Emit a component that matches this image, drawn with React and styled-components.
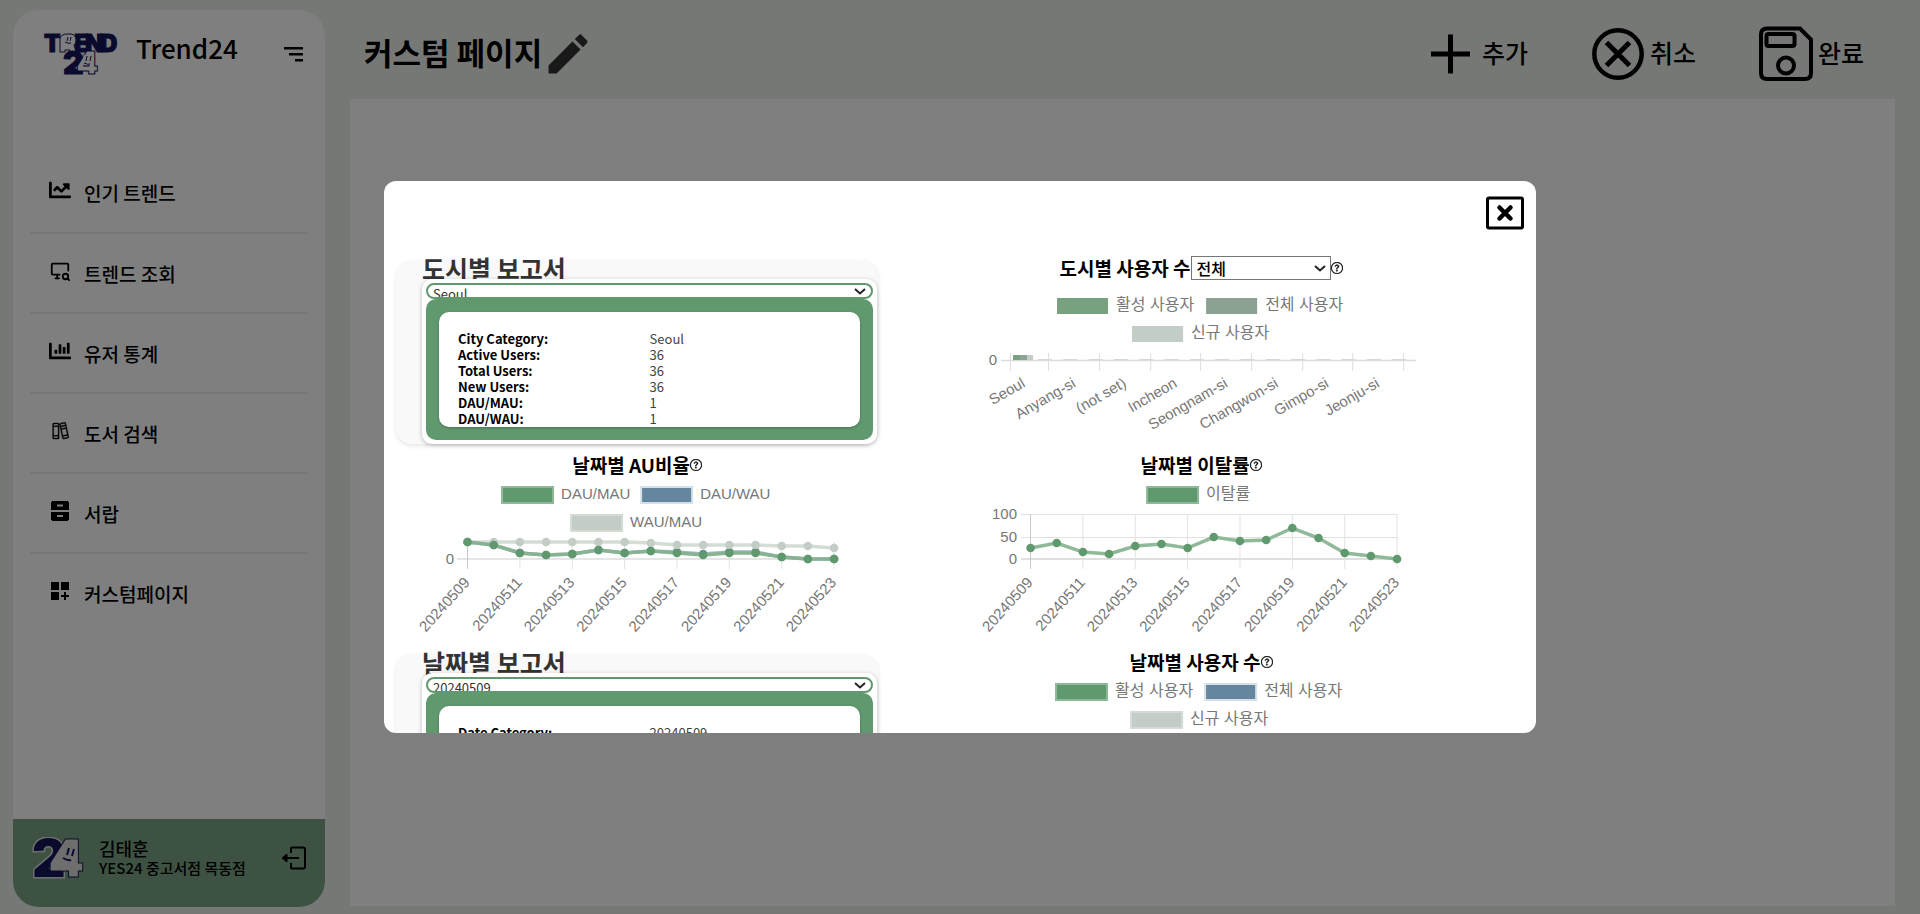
import React from "react";
import styled, { createGlobalStyle } from "styled-components";
import { FaChartLine, FaChartBar } from "react-icons/fa";
import { TbDeviceDesktopSearch } from "react-icons/tb";
import { PiBooksLight } from "react-icons/pi";
import { MdEdit } from "react-icons/md";
import { BsQuestionCircle } from "react-icons/bs";

const GREEN = "#61996f";
const BLUE = "#64869e";
const PALE = "#c3cdc5";
const NAVY = "#14145a";

const GlobalStyle = createGlobalStyle`
  *, *::before, *::after { box-sizing: border-box; }
  body {
    margin: 0;
    background: #edf1eb;
    color: #000;
    font-family: "Noto Sans CJK KR", "Liberation Sans", sans-serif;
  }
  h1, h2, h3, p, ul { margin: 0; padding: 0; }
  button { font: inherit; color: inherit; background: none; border: 0; padding: 0; cursor: pointer; }
`;

const Page = styled.div`
  display: flex;
  gap: 25px;
  min-height: 100vh;
  padding: 0 25px 0 13px;
`;

const Sidebar = styled.aside`
  display: flex;
  flex: none;
  flex-direction: column;
  width: 312px;
  margin: 10px 0 7px;
  border-radius: 26px;
  overflow: hidden;
  background: #fff;
`;

const Brand = styled.div`
  display: flex;
  align-items: center;
  height: 88px;
  padding: 0 20px 0 30px;
`;

const BrandName = styled.span`
  flex: 1;
  margin-left: 17px;
  padding-bottom: 12px;
  font-size: 26px;
  font-weight: 500;
  line-height: 32px;
`;

const IconButton = styled.button`
  display: flex;
  align-items: center;
  justify-content: center;
`;

const Nav = styled.nav`
  flex: 1;
  padding: 54px 17px 0;
`;

const NavList = styled.ul`
  list-style: none;
`;

const NavItem = styled.li`
  height: 80px;
  & + & {
    border-top: 2px solid #ededed;
  }
`;

const NavLink = styled.a`
  display: flex;
  align-items: center;
  gap: 13px;
  height: 100%;
  padding-left: 19px;
  color: inherit;
  font-size: 19px;
  font-weight: 500;
  text-decoration: none;
  svg { flex: none; margin-bottom: 4px; }
`;

const UserPanel = styled.div`
  display: flex;
  align-items: center;
  height: 88px;
  padding: 0 18px 10px 19px;
  background: #7aa485;
`;

const UserText = styled.div`
  flex: 1;
  margin-left: 15px;
`;

const UserName = styled.p`
  font-size: 18px;
  font-weight: 500;
  line-height: 20px;
`;

const UserShop = styled.p`
  font-size: 15px;
  font-weight: 500;
  line-height: 20px;
`;

const Main = styled.main`
  display: flex;
  flex: 1;
  flex-direction: column;
  min-width: 0;
`;

const Header = styled.header`
  display: flex;
  align-items: center;
  height: 99px;
  padding: 9px 31px 0 14px;
`;

const Title = styled.h1`
  padding-bottom: 4px;
  font-size: 31px;
  font-weight: 700;
  line-height: 40px;
`;

const Actions = styled.div`
  display: flex;
  gap: 63px;
  margin-left: auto;
`;

const ActionButton = styled.button`
  display: flex;
  align-items: center;
  gap: 5px;
  font-size: 25px;
  font-weight: 500;
`;

const ActionLabel = styled.span`
  padding-bottom: 4px;
  line-height: 32px;
`;

const Board = styled.section`
  flex: 1;
  margin-bottom: 8px;
  background: #fff;
`;

const Overlay = styled.div`
  position: fixed;
  inset: 0;
  display: flex;
  align-items: center;
  justify-content: center;
  background: rgba(0, 0, 0, 0.5);
`;

const Modal = styled.div`
  width: 60vw;
  height: 60.5vh;
  padding: 0 12px;
  border-radius: 12px;
  overflow: hidden auto;
  scrollbar-width: none;
  background: #fff;
`;

const ModalBar = styled.div`
  display: flex;
  align-items: flex-start;
  justify-content: flex-end;
  height: 75px;
  padding: 15px 0 0;
`;

const Reports = styled.div`
  display: grid;
  grid-template-columns: 1fr 1fr;
  grid-auto-rows: 197px;
`;

const Cell = styled.div`
  width: 85.5%;
`;

const ChartHead = styled.div`
  display: flex;
  align-items: center;
  justify-content: center;
  height: 24px;
`;

const ChartTitle = styled.h3`
  font-size: 19px;
  font-weight: 700;
  line-height: 24px;
  white-space: nowrap;
`;

const MetricWrap = styled.label`
  position: relative;
  display: block;
  svg {
    position: absolute;
    top: 9px;
    right: 5px;
    pointer-events: none;
  }
`;

const MetricSelect = styled.select`
  display: block;
  width: 140px;
  height: 24px;
  padding: 0 5px;
  appearance: none;
  border: 1px solid #767676;
  border-radius: 0;
  background: #fff;
  color: #000;
  font: 500 16px/20px "Noto Sans CJK KR", sans-serif;
`;

const ChartSvg = styled.svg`
  display: block;
  width: 100%;
  height: auto;
  fill: #777;
  font-family: "Liberation Sans", "Noto Sans CJK KR", sans-serif;
  font-size: 15px;
`;

const ReportCard = styled.section`
  margin-top: 4px;
  padding: 0 1px 0 26px;
  border-radius: 16px;
  background: #f9f9f9;
  box-shadow: 0 2px 4px rgba(0, 0, 0, 0.1);
`;

const ReportTitle = styled.h2`
  height: 19px;
  color: #333;
  font-size: 25px;
  font-weight: 700;
  line-height: 16px;
`;

const ReportBody = styled.div`
  position: relative;
  padding: 4px;
  border-radius: 10px;
  background: #fff;
  box-shadow: 0 1px 4px rgba(0, 0, 0, 0.25);
`;

const SelectWrap = styled.label`
  position: relative;
  display: block;
  height: 16px;
  svg {
    position: absolute;
    top: 5px;
    right: 7px;
    pointer-events: none;
  }
`;

const ReportSelect = styled.select`
  display: block;
  width: 100%;
  height: 16px;
  padding: 0 5px;
  appearance: none;
  border: 2px solid ${GREEN};
  border-radius: 8px;
  background: #fff;
  color: #333;
  font: 400 13px/18px "Noto Sans CJK KR", sans-serif;
`;

const GreenFrame = styled.div`
  padding: 13px;
  border-radius: 10px;
  background: ${GREEN};
`;

const DetailBox = styled.div`
  height: 115px;
  padding: 19px;
  border-radius: 10px;
  overflow: hidden;
  background: #fff;
  box-shadow: 0 1px 3px rgba(0, 0, 0, 0.25);
`;

const DetailTable = styled.table`
  width: 100%;
  border-collapse: collapse;
  table-layout: fixed;
  font-size: 13px;
  line-height: 16px;
  text-align: left;
  th { width: 50%; padding: 0; font-weight: 700; }
  td { padding: 0; color: #444; }
`;

const BrandLogo = () => (
  <svg width="76" height="44" viewBox="0 0 76 44" fontFamily="Inter, sans-serif" fontWeight="900" aria-hidden="true">
    <g fill={NAVY} stroke={NAVY} strokeWidth="1" fontSize="24">
      <text x="1" y="20">T</text>
      <text x="31" y="20">E</text>
      <text x="42" y="20">N</text>
      <text x="57" y="20">D</text>
    </g>
    <path d="M17 20V7q1-5 7-5h4q5 1 5 6 0 4-2 5l2 7h-6v-2h-5v2z" fill="#fff" stroke={NAVY} strokeWidth="1" />
    <path d="M25 5l-1 4M28 5l-1 4M22 10q3 2 6 1" fill="none" stroke={NAVY} strokeWidth="1" />
    <text x="20" y="42" fontSize="32" fill={NAVY} stroke={NAVY} strokeWidth="1">2</text>
    <text x="33" y="42" fontSize="32" fill="#fff" stroke={NAVY} strokeWidth="1">4</text>
    <path d="M41 23h7v10h-10z" fill="#fff" />
    <path d="M44 24l-1 5M48 24l-1 5M41 31q4 2 6 1" fill="none" stroke={NAVY} strokeWidth="1" />
  </svg>
);

const UserLogo = () => (
  <svg width="52" height="42" viewBox="0 0 52 42" fontFamily="Inter, sans-serif" fontWeight="900" fontSize="52" aria-hidden="true">
    <text x="0" y="40" fill={NAVY} stroke="#ddd" strokeWidth="3" paintOrder="stroke">2</text>
    <text x="16" y="40" fill="#ddd" stroke={NAVY} strokeWidth="1">4</text>
    <path d="M31 10h11v21H23z" fill="#ddd" />
    <path d="M37 11l-2 7M42 12l-2 7M31 21q5 3 8 2" fill="none" stroke={NAVY} strokeWidth="2" />
  </svg>
);

const MenuIcon = () => (
  <svg width="24" height="24" viewBox="0 0 24 24" aria-hidden="true">
    <path d="M3 5h19v2.500H3zM8 11h14v2.500H8zM14 17h8v2.500h-8z" />
  </svg>
);

const DrawerIcon = () => (
  <svg width="22" height="22" viewBox="0 0 22 22" fillRule="evenodd" aria-hidden="true">
    <path d="M3 1h16v1h1v8H2V2h1zM8 4.500v2h6v-2zM2 12h18v8h-1v1H3v-1H2zM8 15v2h6v-2z" />
  </svg>
);

const CustomIcon = () => (
  <svg width="22" height="22" viewBox="0 0 22 22" aria-hidden="true">
    <path d="M2 2h8v8H2zM12 2h8v8h-8zM2 12h8v8H2zM15 12h2v3h3v2h-3v3h-2v-3h-3v-2h3z" />
  </svg>
);

const LogoutIcon = () => (
  <svg width="26" height="26" viewBox="0 0 26 26" fill="none" stroke="#000" strokeWidth="2" aria-hidden="true">
    <path d="M10 8V3.500q0-1 1-1h11q2 0 2 2v17q0 2-2 2H11q-1 0-1-1V18M5 13h13" />
    <path d="M6 9v8l-5-4z" fill="#000" strokeWidth="1" />
  </svg>
);

const PlusIcon = () => (
  <svg width="54" height="56" viewBox="0 0 54 56" aria-hidden="true">
    <path d="M8 25.500h17V8.500h5v17h17v5H30v17h-5v-17H8z" />
  </svg>
);

const CancelIcon = () => (
  <svg width="54" height="56" viewBox="0 0 54 56" fill="none" stroke="#000" strokeWidth="4.500" aria-hidden="true">
    <circle cx="27" cy="28" r="23.700" />
    <path d="M15.500 16.500l23 23M38.500 16.500l-23 23" strokeWidth="5" />
  </svg>
);

const SaveIcon = () => (
  <svg width="54" height="56" viewBox="0 0 54 56" fill="none" stroke="#000" strokeWidth="4" aria-hidden="true">
    <path d="M8 2.500h33l11 11V47q0 6-6 6H8q-6 0-6-6V8.500q0-6 6-6z" />
    <rect x="7.500" y="8" width="28" height="12" rx="2" />
    <circle cx="27" cy="39.500" r="8" />
  </svg>
);

const CloseIcon = () => (
  <svg width="38" height="34" viewBox="0 0 38 34" fill="none" stroke="#000" aria-hidden="true">
    <rect x="1.500" y="2" width="35" height="30" rx="1.500" strokeWidth="3" />
    <path d="M13.500 11.500l11 11M24.500 11.500l-11 11" strokeWidth="4.500" strokeLinecap="round" />
  </svg>
);

const Chevron = () => (
  <svg width="12" height="7" viewBox="0 0 12 7" fill="none" stroke="#222" strokeWidth="2" aria-hidden="true">
    <path d="M1 1l5 4.500L11 1" />
  </svg>
);

const NAV = [
  { label: "인기 트렌드", icon: <FaChartLine size={22} /> },
  { label: "트렌드 조회", icon: <TbDeviceDesktopSearch size={22} /> },
  { label: "유저 통계", icon: <FaChartBar size={22} /> },
  { label: "도서 검색", icon: <PiBooksLight size={22} stroke="#000" strokeWidth={4} /> },
  { label: "서랍", icon: <DrawerIcon /> },
  { label: "커스텀페이지", icon: <CustomIcon /> },
];

const CITIES = ["Seoul", "Anyang-si", "(not set)", "Incheon", "Seongnam-si", "Changwon-si", "Gimpo-si", "Jeonju-si"];
const DATES = ["20240509", "20240511", "20240513", "20240515", "20240517", "20240519", "20240521", "20240523"];

const Legend = ({ items, size = 15 }) =>
  items.map(({ label, x, y, color, edge }) => (
    <g key={label}>
      <rect x={x} y={y} width="51" height="16" fill={color} stroke={edge || color} strokeWidth={edge ? 2 : 0} />
      <text x={x + 59} y={y + 12} fontSize={size}>{label}</text>
    </g>
  ));

const Series = ({ x0, ys, color, line }) => {
  const pts = ys.map((y, i) => [x0 + i * 26.17, y]);
  return (
    <g>
      <polyline points={pts.map((p) => p.join(",")).join(" ")} fill="none" stroke={line} strokeWidth="3.500" />
      {pts.map(([x, y]) => (
        <circle key={x} cx={x} cy={y} r="4.300" fill={color} />
      ))}
    </g>
  );
};

const DateAxis = ({ x0, top }) =>
  DATES.map((d, i) => {
    const x = x0 + i * 52.34;
    return (
      <g key={d}>
        <path d={`M${x} ${top}V92`} stroke={i ? "#e2e2e2" : "#c8c8c8"} />
        <text transform={`translate(${x + 3} 106) rotate(-48)`} textAnchor="end">{d}</text>
      </g>
    );
  });

const Help = () => <BsQuestionCircle size={12} stroke="#000" strokeWidth={0.5} aria-label="도움말" />;

const CityUsersChart = () => (
  <ChartSvg viewBox="0 0 482 173" role="img" aria-label="도시별 사용자 수">
    <Legend
      size={16}
      items={[
        { label: "활성 사용자", x: 97, y: 18, color: "#77a17f" },
        { label: "전체 사용자", x: 246, y: 18, color: "#8ba292" },
        { label: "신규 사용자", x: 172, y: 46, color: "#c2cdc5" },
      ]}
    />
    <text x="37" y="85" textAnchor="end">0</text>
    <path d="M41 80.500H456" stroke="#dcdcdc" strokeWidth="1.500" />
    {[50, 88, 139, 190, 240, 291, 342, 392, 443].map((x) => (
      <path key={x} d={`M${x}.5 73V91`} stroke="#dedede" />
    ))}
    <rect x="53" y="75" width="7" height="5" fill="#77a17f" />
    <rect x="60" y="75" width="7" height="5" fill="#8ba292" />
    <rect x="67" y="75" width="6" height="5" fill="#c2cdc5" />
    {Array.from({ length: 15 }, (_, i) => (
      <rect key={i} x={78 + i * 25.3} y="79" width="14" height="1" fill="#cfdbd2" />
    ))}
    {CITIES.map((c, i) => (
      <text key={c} transform={`translate(${66 + i * 50.6} 106) rotate(-30)`} textAnchor="end">{c}</text>
    ))}
  </ChartSvg>
);

const RatioChart = () => (
  <ChartSvg viewBox="0 0 482 173" role="img" aria-label="날짜별 AU비율">
    <Legend
      items={[
        { label: "DAU/MAU", x: 106, y: 10, color: GREEN, edge: "#8fb999" },
        { label: "DAU/WAU", x: 245, y: 10, color: BLUE, edge: "#d5e0e8" },
        { label: "WAU/MAU", x: 175, y: 38, color: PALE, edge: "#d3dcd5" },
      ]}
    />
    <text x="58" y="87" textAnchor="end">0</text>
    <path d="M61 82H438" stroke="#dcdcdc" strokeWidth="1.500" />
    <DateAxis x0={71.5} top={65} />
    <Series x0={71.5} color={BLUE} line="#a3b8c7" ys={[65, 68, 76, 78, 77, 73, 76, 74, 75, 77, 75, 75, 80, 82, 82]} />
    <Series x0={71.5} color={PALE} line="#d3dcd5" ys={[65, 65, 65, 65, 65, 65, 65, 66, 68, 68, 68, 68, 69, 69, 71]} />
    <Series x0={71.5} color={GREEN} line="#87b392" ys={[65, 68, 76, 78, 77, 73, 76, 74, 76, 78, 76, 76, 80, 82, 82]} />
  </ChartSvg>
);

const BounceChart = () => (
  <ChartSvg viewBox="0 0 482 173" role="img" aria-label="날짜별 이탈률">
    <Legend size={16} items={[{ label: "이탈률", x: 187, y: 10, color: GREEN, edge: "#8fb999" }]} />
    <text x="57" y="42" textAnchor="end">100</text>
    <text x="57" y="65" textAnchor="end">50</text>
    <text x="57" y="87" textAnchor="end">0</text>
    <path d="M61 37.500H438M61 60.500H438" stroke="#e2e2e2" />
    <path d="M61 82H438" stroke="#d4d4d4" strokeWidth="1.500" />
    <DateAxis x0={70.5} top={37} />
    <Series x0={70.5} color={GREEN} line="#8fb999" ys={[71, 66, 75, 77, 69, 67, 71, 60, 64, 63, 51, 61, 76, 79, 82]} />
  </ChartSvg>
);

const DateUsersChart = () => (
  <ChartSvg viewBox="0 0 482 173" role="img" aria-label="날짜별 사용자 수">
    <Legend
      size={16}
      items={[
        { label: "활성 사용자", x: 96, y: 10, color: GREEN, edge: "#8fb999" },
        { label: "전체 사용자", x: 245, y: 10, color: BLUE, edge: "#d5e0e8" },
        { label: "신규 사용자", x: 171, y: 38, color: PALE, edge: "#d3dcd5" },
      ]}
    />
    <path d="M61 82H438" stroke="#dcdcdc" strokeWidth="1.500" />
    <DateAxis x0={70.5} top={65} />
  </ChartSvg>
);

const Report = ({ title, option, rows }) => (
  <Cell>
    <ReportCard>
      <ReportTitle>{title}</ReportTitle>
      <ReportBody>
        <SelectWrap>
          <ReportSelect aria-label={title} defaultValue={option}>
            <option>{option}</option>
          </ReportSelect>
          <Chevron />
        </SelectWrap>
        <GreenFrame>
          <DetailBox>
            <DetailTable>
              <tbody>
                {rows.map(([name, value]) => (
                  <tr key={name}>
                    <th scope="row">{name}:</th>
                    <td>{value}</td>
                  </tr>
                ))}
              </tbody>
            </DetailTable>
          </DetailBox>
        </GreenFrame>
      </ReportBody>
    </ReportCard>
  </Cell>
);

const ChartCell = ({ title, control, children }) => (
  <Cell>
    <ChartHead>
      <ChartTitle>{title}</ChartTitle>
      {control}
      <Help />
    </ChartHead>
    {children}
  </Cell>
);

export default function App() {
  return (
    <>
      <GlobalStyle />
      <Page>
        <Sidebar>
          <Brand>
            <BrandLogo />
            <BrandName>Trend24</BrandName>
            <IconButton aria-label="메뉴"><MenuIcon /></IconButton>
          </Brand>
          <Nav>
            <NavList>
              {NAV.map(({ label, icon }) => (
                <NavItem key={label}>
                  <NavLink href="#">{icon}{label}</NavLink>
                </NavItem>
              ))}
            </NavList>
          </Nav>
          <UserPanel>
            <UserLogo />
            <UserText>
              <UserName>김태훈</UserName>
              <UserShop>YES24 중고서점 목동점</UserShop>
            </UserText>
            <IconButton aria-label="로그아웃"><LogoutIcon /></IconButton>
          </UserPanel>
        </Sidebar>
        <Main>
          <Header>
            <Title>커스텀 페이지</Title>
            <IconButton aria-label="이름 수정"><MdEdit size={52} color="#333" /></IconButton>
            <Actions>
              <ActionButton><PlusIcon /><ActionLabel>추가</ActionLabel></ActionButton>
              <ActionButton><CancelIcon /><ActionLabel>취소</ActionLabel></ActionButton>
              <ActionButton><SaveIcon /><ActionLabel>완료</ActionLabel></ActionButton>
            </Actions>
          </Header>
          <Board />
        </Main>
      </Page>
      <Overlay>
        <Modal role="dialog" aria-modal="true" aria-label="차트 추가">
          <ModalBar>
            <IconButton aria-label="닫기"><CloseIcon /></IconButton>
          </ModalBar>
          <Reports>
            <Report
              title="도시별 보고서"
              option="Seoul"
              rows={[
                ["City Category", "Seoul"],
                ["Active Users", "36"],
                ["Total Users", "36"],
                ["New Users", "36"],
                ["DAU/MAU", "1"],
                ["DAU/WAU", "1"],
              ]}
            />
            <ChartCell
              title="도시별 사용자 수"
              control={
                <MetricWrap>
                  <MetricSelect aria-label="사용자 구분" defaultValue="전체">
                    <option>전체</option>
                  </MetricSelect>
                  <Chevron />
                </MetricWrap>
              }
            >
              <CityUsersChart />
            </ChartCell>
            <ChartCell title="날짜별 AU비율"><RatioChart /></ChartCell>
            <ChartCell title="날짜별 이탈률"><BounceChart /></ChartCell>
            <Report title="날짜별 보고서" option="20240509" rows={[["Date Category", "20240509"]]} />
            <ChartCell title="날짜별 사용자 수"><DateUsersChart /></ChartCell>
          </Reports>
        </Modal>
      </Overlay>
    </>
  );
}
